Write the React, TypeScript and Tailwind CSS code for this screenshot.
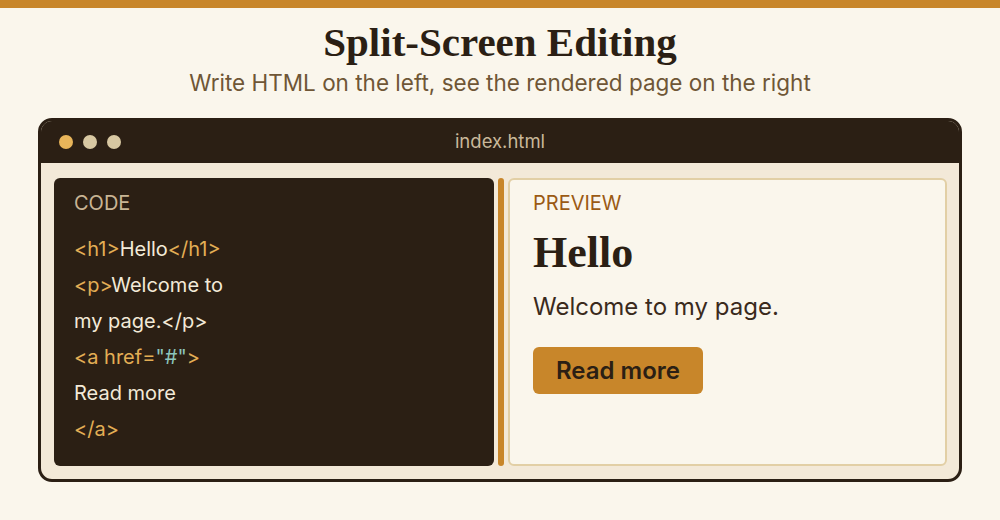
import React from "react";

const serif = { fontFamily: '"Liberation Serif", "Times New Roman", serif' };

export default function App() {
  return (
    <div
      className="w-full h-[520px] bg-[#faf6ec] flex flex-col overflow-hidden"
      style={{ fontFamily: 'Inter, "Noto Sans", sans-serif' }}
    >
      <div className="h-[8px] bg-[#c8862a] shrink-0" />
      <h1
        className="mt-[10px] text-center text-[41px] leading-[48px] font-bold text-[#2b1f14]"
        style={serif}
      >
        Split-Screen Editing
      </h1>
      <p className="mt-[3px] text-center text-[22.5px] leading-[28px] text-[#6f5636]">
        Write HTML on the left, see the rendered page on the right
      </p>
      <div className="mt-[21px] mx-[38px] h-[364px] border-[3px] border-[#2b1f14] rounded-[14px] bg-[#f3e9d8] overflow-hidden flex flex-col">
        <div className="h-[42px] bg-[#2b1f14] grid grid-cols-[1fr_auto_1fr] items-center px-[18px] shrink-0">
          <div className="flex items-center gap-[10px]">
            <span className="w-[14px] h-[14px] rounded-full bg-[#e8b55a]" />
            <span className="w-[14px] h-[14px] rounded-full bg-[#d8c8a2]" />
            <span className="w-[14px] h-[14px] rounded-full bg-[#d8c8a2]" />
          </div>
          <div className="text-[18.5px] text-[#c9b89a]">index.html</div>
          <div />
        </div>
        <div className="flex-1 flex gap-[4px] pl-[13px] pr-[12px] pt-[15px] pb-[13px]">
          <div className="w-[440px] shrink-0 bg-[#2b1f14] rounded-[6px] px-[20px] pt-[13px]">
            <div className="text-[20px] leading-[24px] text-[#c9b595]">CODE</div>
            <div className="mt-[16px] text-[20px] leading-[36px] text-[#f3ead8]">
              <div>
                <span className="text-[#e3ae55]">&lt;h1&gt;</span>Hello
                <span className="text-[#e3ae55]">&lt;/h1&gt;</span>
              </div>
              <div>
                <span className="text-[#e3ae55]">&lt;p&gt;</span>Welcome to
              </div>
              <div>my page.&lt;/p&gt;</div>
              <div>
                <span className="text-[#e3ae55]">&lt;a href=</span>
                <span className="text-[#8cc5bd]">"#"</span>
                <span className="text-[#e3ae55]">&gt;</span>
              </div>
              <div>Read more</div>
              <div className="text-[#e3ae55]">&lt;/a&gt;</div>
            </div>
          </div>
          <div className="w-[6px] shrink-0 bg-[#c8862a] rounded-full" />
          <div className="w-[439px] shrink-0 border-2 border-[#e2cfa5] rounded-[6px] bg-[#faf6ec] px-[23px] pt-[11px]">
            <div className="text-[20px] leading-[24px] text-[#9b5a14]">PREVIEW</div>
            <div
              className="mt-[16px] text-[44px] leading-[44px] font-bold text-[#2b1f14]"
              style={serif}
            >
              Hello
            </div>
            <div className="mt-[16px] text-[24px] leading-[32px] text-[#3a2a1c]">
              Welcome to my page.
            </div>
            <div className="mt-[24px] inline-flex items-center justify-center w-[170px] h-[47px] rounded-[6px] bg-[#c8862a] text-[24px] font-semibold text-[#2b1f14]">
              Read more
            </div>
          </div>
        </div>
      </div>
    </div>
  );
}
